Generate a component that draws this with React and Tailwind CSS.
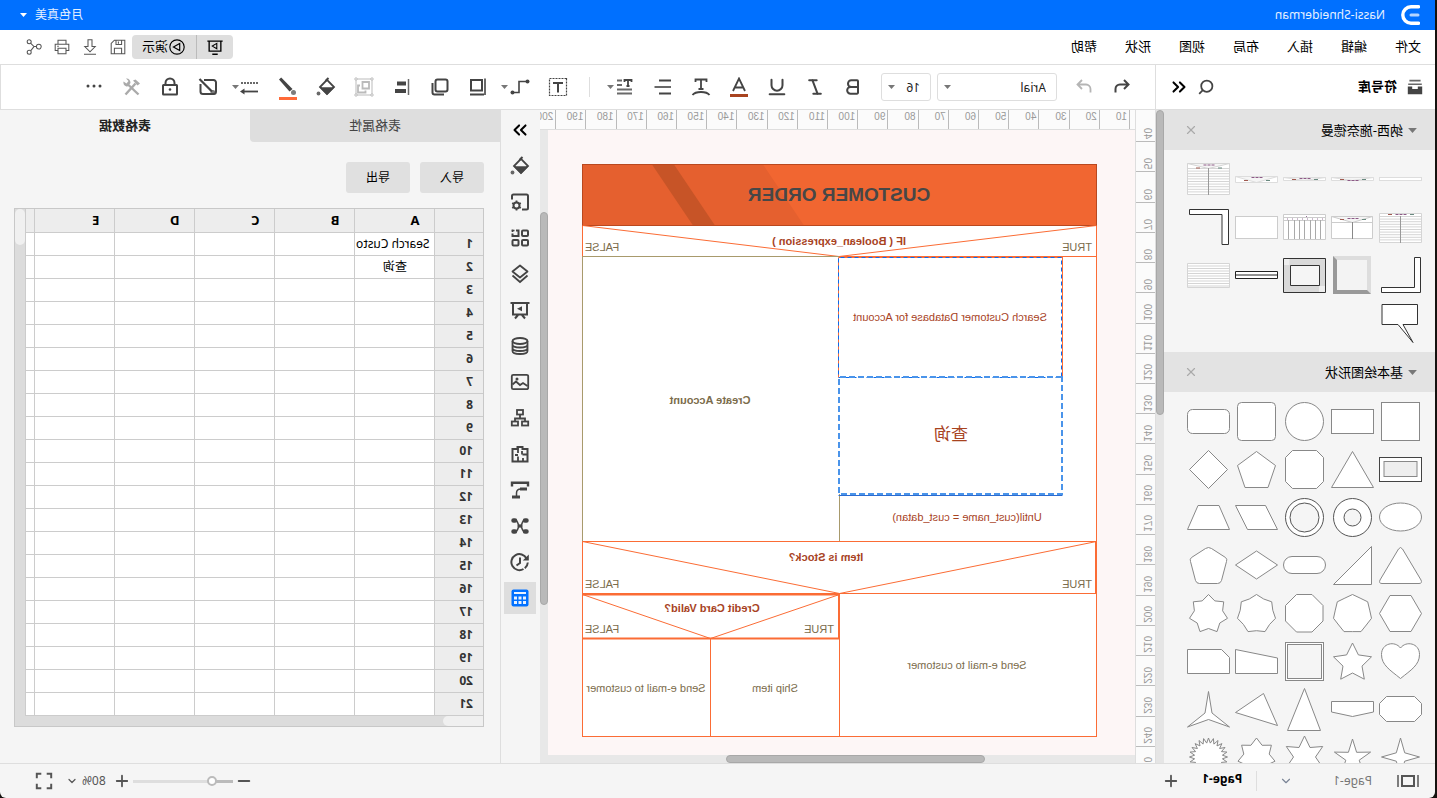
import clsx from 'clsx'
import { Bold, Italic, Underline, ChevronDown, ChevronsLeft, ChevronsRight, Minus, Plus, X } from 'lucide-react'

const menuItems = ['文件', '编辑', '插入', '布局', '视图', '形状', '帮助']

const Icon = ({ size = 20, width = 2, className, children }) => (
  <svg
    width={size}
    height={size}
    viewBox="0 0 20 20"
    fill="none"
    stroke="currentColor"
    strokeWidth={width}
    className={clsx('shrink-0', className)}
    aria-hidden="true"
  >
    {children}
  </svg>
)

const Caret = ({ className }) => (
  <svg width="7" height="4" viewBox="0 0 7 4" fill="currentColor" className={clsx('shrink-0', className)} aria-hidden="true">
    <path d="M0 0h7L3.500 4z" />
  </svg>
)

/* ---------- icons ---------- */

const BucketIcon = () => (
  <Icon>
    <path d="M7.500 1l3 3" strokeWidth="2" />
    <path d="M9 2.800L2 10l7 7 7-7-7-7.200z" strokeWidth="1.800" />
    <path d="M1.500 10.200h15L9 18z" fill="currentColor" stroke="none" />
    <circle cx="17.500" cy="16.500" r="1.900" fill="currentColor" stroke="none" opacity="0.8" />
  </Icon>
)

const PageGearIcon = () => (
  <Icon>
    <path d="M8 17.500H3.500a1.500 1.500 0 01-1.500-1.500V4a1.500 1.500 0 011.500-1.500h13A1.500 1.500 0 0118 4v3.500" />
    <circle cx="13.500" cy="13.500" r="3" />
    <path d="M13.500 8.500v2M13.500 16.500v2M9.200 11l1.700 1M16.100 15l1.700 1M9.200 16l1.700-1M16.100 12l1.700-1" strokeWidth="1.800" />
  </Icon>
)

const GridIcon = () => (
  <Icon>
    <rect x="2" y="2.500" width="6" height="5.500" rx="1" />
    <rect x="2" y="12" width="6" height="5.500" rx="1" />
    <rect x="11.500" y="12" width="6" height="5.500" rx="1" />
    <path d="M14 2.500h-2.500V8h6V5.500" />
    <path d="M15.500 2.500h3M17.500 1.500v2.500" strokeWidth="1.600" />
  </Icon>
)

const LayersIcon = () => (
  <Icon width={1.8}>
    <path d="M10 1.500l7.500 6-7.500 6-7.500-6z" strokeLinejoin="round" />
    <path d="M2.500 11.500l7.500 6.500 7.500-6.500" />
  </Icon>
)

const PresentIcon = () => (
  <Icon>
    <path d="M0.500 3h19" />
    <path d="M3 3v11.500h14V3M8 15l-3 3.500M12 15l3 3.500" />
    <path d="M8 6.200v5l5-2.500z" fill="currentColor" stroke="none" />
  </Icon>
)

const DatabaseIcon = () => (
  <Icon width={1.8}>
    <ellipse cx="10" cy="5" rx="7.500" ry="3" />
    <path d="M2.500 5v10c0 4 15 4 15 0V5M2.500 8.500c0 4 15 4 15 0M2.500 12c0 4 15 4 15 0" />
  </Icon>
)

const ImageIcon = () => (
  <Icon width={1.8}>
    <rect x="1.800" y="2.800" width="16.400" height="14.400" rx="1.500" />
    <path d="M2.500 14l4.500-3 3 2 4-3.500 3.500 3" />
    <circle cx="13" cy="7" r="1.500" fill="currentColor" stroke="none" />
  </Icon>
)

const OrgIcon = () => (
  <Icon width={1.8}>
    <rect x="7" y="2" width="6" height="4.500" />
    <rect x="1.800" y="13.500" width="6.200" height="4" />
    <rect x="12" y="13.500" width="6.200" height="4" />
    <path d="M10 6.500v4M5 13.500v-3h10v3" />
  </Icon>
)

const PlanIcon = () => (
  <Icon>
    <path d="M2.500 5h5V3h5v2h5v12.500h-15z" transform="translate(20 0) scale(-1 1)" />
    <path d="M3 10.500h4.500M8 7v3.500M12 3.500V9M12 12.500v5M12 11h3M7 14v3" strokeWidth="1.800" />
  </Icon>
)

const TimelineIcon = () => (
  <Icon>
    <path d="M2 6.500V2.800h16v3.700" strokeWidth="2.400" />
    <path d="M3 9h7" strokeWidth="3" />
    <path d="M9 9c3.500 0 4.500 1.500 4.500 4v3" strokeWidth="1.500" />
    <path d="M10 17h8" strokeWidth="3" />
  </Icon>
)

const MindMapIcon = () => (
  <Icon>
    <path d="M3.500 4.500h1.500M3.500 15.500h1.500M15 4.500h1.500M15 15.500h1.500" strokeWidth="4.500" strokeLinecap="round" />
    <path d="M5.500 4.500c3 0 2 5.500 4.500 5.500s1.500 5.500 4.500 5.500M14.500 4.500c-3 0-2 5.500-4.500 5.500s-1.500 5.500-4.500 5.500" strokeWidth="1.500" />
    <path d="M7.500 10h5" strokeWidth="3" />
  </Icon>
)

const HistoryIcon = () => (
  <Icon>
    <path d="M3.500 6.500a8 8 0 113 10.500M2.200 10.500a8 8 0 003 5.800" />
    <path d="M1.200 2.500v6h6z" fill="currentColor" stroke="none" />
    <path d="M10 5.500V11l3.500 2.500" />
  </Icon>
)

const TableIcon = () => (
  <Icon>
    <rect x="1.500" y="1.500" width="17" height="17" rx="2" fill="currentColor" stroke="none" />
    <path d="M4 5h12" stroke="#e8f1ff" />
    <path d="M4 10h3M8.500 10h3M13 10h3M4 14.500h3M8.500 14.500h3M13 14.500h3" stroke="#e8f1ff" strokeWidth="3" />
  </Icon>
)

const dockIcons = [
  ['填充', BucketIcon],
  ['页面设置', PageGearIcon],
  ['组件', GridIcon],
  ['图层', LayersIcon],
  ['演示', PresentIcon],
  ['数据', DatabaseIcon],
  ['图片', ImageIcon],
  ['组织结构', OrgIcon],
  ['平面图', PlanIcon],
  ['时间线', TimelineIcon],
  ['思维导图', MindMapIcon],
  ['历史', HistoryIcon],
  ['表格', TableIcon],
]

/* ---------- top ---------- */

const TitleBar = () => (
  <header className="flex h-[30px] shrink-0 items-center bg-[#0070ff] pl-[15px] pr-5 text-xs text-white">
    <svg width="19" height="20" viewBox="0 0 19 20" fill="none" stroke="currentColor" aria-hidden="true">
      <path d="M1.500 1.800H9a8.200 8.200 0 010 16.400H1.500" strokeWidth="3.400" strokeLinecap="round" />
      <path d="M2 10h7" strokeWidth="3" strokeLinecap="round" opacity="0.7" />
    </svg>
    <span className="ml-4 opacity-90">Nassi-Shneiderman</span>
    <button type="button" className="ml-auto flex items-center gap-2">
      <span className="opacity-90">月色真美</span>
      <Caret />
    </button>
  </header>
)

const MenuBar = () => (
  <div className="flex h-[35px] shrink-0 items-center border-b border-[#dedede] bg-white pl-3.5 pr-[26px] text-[13px] text-black">
    <nav className="flex gap-7">
      {menuItems.map((item) => (
        <button key={item} type="button">{item}</button>
      ))}
    </nav>
    <div className="ml-auto flex items-center gap-3 text-[#555]">
      <div className="-mr-1.5 flex h-6 overflow-hidden rounded bg-[#dedede] text-black">
        <button type="button" aria-label="放映" className="flex w-9 items-center justify-center">
          <Icon size={18} width={1.5}>
            <path d="M1.500 3.500h17M3.500 3.500v11h13v-11M7 18h6" />
            <path d="M8 6v6l5-3z" strokeWidth="1.200" />
          </Icon>
        </button>
        <button type="button" className="flex w-[65px] items-center justify-center border-l border-[#bbb]">
          <Icon size={18} width={1.3}>
            <circle cx="10" cy="10" r="8" />
            <path d="M7 6v8l7-4z" />
          </Icon>
          演示
        </button>
      </div>
      <button type="button" aria-label="保存">
        <Icon size={16} width={1.3}>
          <path d="M1.500 1.500h13l4 4v13h-17zM5.500 18.500v-7h9v7M5.500 1.500v5.500h7V1.500M9.500 3v3" />
        </Icon>
      </button>
      <button type="button" aria-label="下载">
        <Icon size={16} width={1.3}>
          <path d="M7.500 1h5v8.500h4L10 16 3.500 9.500h4zM2.500 19h15" />
        </Icon>
      </button>
      <button type="button" aria-label="打印">
        <Icon size={16} width={1.3}>
          <path d="M5 6V1.500h10V6M5 14.500H1.500V6.500h17v8H15M5 11.500h10v7H5zM14 9h2" />
        </Icon>
      </button>
      <button type="button" aria-label="分享">
        <Icon size={16} width={1.3}>
          <circle cx="4" cy="9.500" r="3" />
          <circle cx="16" cy="3.500" r="2.500" />
          <circle cx="16" cy="16.500" r="2.500" />
          <path d="M7 9.500h3l4-4M10 9.500l4 5" />
        </Icon>
      </button>
    </div>
  </div>
)

const Tool = ({ label, children, className }) => (
  <button type="button" aria-label={label} className={clsx('flex h-8 w-[38px] shrink-0 items-center justify-center text-[#444]', className)}>
    {children}
  </button>
)

const Picker = ({ label, value, className }) => (
  <label className={clsx('relative block h-7 rounded-[3px] border border-[#dedede] bg-white', className)}>
    <span className="sr-only">{label}</span>
    <select className="h-full w-full appearance-none bg-transparent pl-2.5 text-xs text-[#222]" defaultValue={value}>
      <option>{value}</option>
    </select>
    <Caret className="pointer-events-none absolute right-1.5 top-[11px] text-[#777]" />
  </label>
)

const Toolbar = () => (
  <div className="flex min-w-0 grow items-center border-r border-[#dedede] pl-3.5">
    <Tool label="撤销">
      <Icon>
        <path d="M8 3L3.500 7.500 8 12M3.500 7.500h8.500a4.500 4.500 0 014.500 4.500v3.500" />
      </Icon>
    </Tool>
    <Tool label="重做" className="text-[#b5b5b5]!">
      <Icon width={1.8}>
        <path d="M12 3l4.500 4.500L12 12M16.500 7.500H8A4.500 4.500 0 003.500 12v3.500" />
      </Icon>
    </Tool>
    <Picker label="字体" value="Arial" className="ml-2 w-[120px]" />
    <Picker label="字号" value="16" className="ml-1.5 w-[50px]" />
    <Tool label="加粗" className="ml-[9px]"><Bold size={20} strokeWidth={2.4} /></Tool>
    <Tool label="斜体"><Italic size={20} strokeWidth={2.4} /></Tool>
    <Tool label="下划线"><Underline size={22} strokeWidth={2.2} /></Tool>
    <Tool label="文字颜色">
      <Icon>
        <path d="M4 14l6-12.500L16 14M6 10.500h8" strokeWidth="1.800" />
        <path d="M1 18.500h18" stroke="#a8431f" strokeWidth="3" />
      </Icon>
    </Tool>
    <Tool label="文字弧形">
      <Icon>
        <path d="M4.500 5V2.500h11V5M10 2.500V12M7.500 12h5" strokeWidth="1.800" />
        <path d="M1.500 18c3-4 14-4 17 0" strokeWidth="1.800" />
      </Icon>
    </Tool>
    <Tool label="对齐">
      <Icon>
        <path d="M2 3.500h12M2 16.500h12" />
        <path d="M2 10h16.500" opacity="0.8" />
      </Icon>
    </Tool>
    <Tool label="行距">
      <Icon className="ml-2">
        <path d="M2.500 5V3h7v2M6 3v6M4.500 9h3" strokeWidth="1.800" />
        <path d="M12 3.500h5M12 8h5M2 12.500h15M2 16.500h15" strokeWidth="1.800" opacity="0.8" />
      </Icon>
      <Caret className="text-[#777]" />
    </Tool>
    <div className="mx-4 h-5 w-px shrink-0 bg-[#dedede]" />
    <Tool label="文本框" className="-ml-1">
      <Icon>
        <rect x="1.500" y="1.500" width="17" height="17" strokeWidth="1.200" strokeDasharray="2 1" />
        <path d="M5 6h10M10 6v9.500" strokeWidth="2" />
      </Icon>
    </Tool>
    <Tool label="连接线">
      <Icon className="ml-2" width={1.6}>
        <path d="M3 4.500h4.500l3.500 0v11h6" />
        <circle cx="2.500" cy="4.500" r="2" fill="currentColor" stroke="none" />
        <circle cx="17.500" cy="15.500" r="2" fill="currentColor" stroke="none" />
      </Icon>
      <Caret className="ml-0.5 text-[#777]" />
    </Tool>
    <Tool label="置底" className="ml-1">
      <Icon>
        <path d="M3 1.500v16.500" opacity="0.800" />
        <path d="M6 3h11v10.500H6zM4 17.500h14" strokeWidth="2" />
      </Icon>
    </Tool>
    <Tool label="层次">
      <Icon>
        <rect x="2.500" y="2.500" width="12" height="12" rx="2" />
        <path d="M17.500 6v9.500a2 2 0 01-2 2H6" />
      </Icon>
    </Tool>
    <Tool label="左对齐">
      <Icon>
        <path d="M3.500 2v16" strokeWidth="1.500" opacity="0.800" />
        <path d="M6 6.500h9M6 14h11" strokeWidth="4" />
      </Icon>
    </Tool>
    <Tool label="组合" className="text-[#bbb]!">
      <Icon width={1}>
        <rect x="2" y="2" width="16" height="16" />
        <g fill="#fff">
          <circle cx="2" cy="2" r="1.200" />
          <circle cx="18" cy="2" r="1.200" />
          <circle cx="2" cy="18" r="1.200" />
          <circle cx="18" cy="18" r="1.200" />
        </g>
        <path d="M5 5h6.500v6.500H5zM14 8.500h2v7H8.500v-2" strokeWidth="1.800" />
      </Icon>
    </Tool>
    <Tool label="填充"><BucketIcon /></Tool>
    <Tool label="线条颜色">
      <svg width="20" height="26" viewBox="0 0 20 26" fill="none" aria-hidden="true">
        <path d="M16.800 3.500L19 5.500 8.500 17.500 5.500 15z" fill="currentColor" />
        <circle cx="4.500" cy="18.500" r="2.500" fill="currentColor" opacity="0.700" />
        <path d="M1 24.500h18" stroke="#ff6a38" strokeWidth="3" />
      </svg>
    </Tool>
    <Tool label="线型">
      <Icon className="ml-2">
        <path d="M1 6h18" strokeWidth="1.800" strokeDasharray="2 1" opacity="0.800" />
        <path d="M1 14.500h15" strokeWidth="1.800" />
        <path d="M14.500 11.500l4.500 3-4.500 3z" fill="currentColor" stroke="none" />
      </Icon>
      <Caret className="text-[#777]" />
    </Tool>
    <Tool label="无样式" className="ml-1">
      <Icon>
        <path d="M14 3H4.500A2.500 2.500 0 002 5.500v9A2.500 2.500 0 004.500 17H15a2.500 2.500 0 002.500-2.500V7" />
        <path d="M18.500 2L6 14.500" strokeWidth="2.200" />
        <circle cx="5" cy="15.500" r="2.500" fill="currentColor" stroke="none" opacity="0.700" />
      </Icon>
    </Tool>
    <Tool label="锁定">
      <Icon>
        <rect x="3" y="8" width="14" height="9.500" rx="0.500" />
        <path d="M5.500 8V6a4.500 4.500 0 019 0v2" />
        <circle cx="10" cy="12.500" r="1.300" fill="currentColor" stroke="none" />
      </Icon>
    </Tool>
    <Tool label="工具" className="text-[#aaa]!">
      <Icon>
        <path d="M6.500 6.500L16.500 17.500" strokeWidth="2.400" />
        <path d="M2 6.500L6.500 2.500l2.500 1-4.500 5z" fill="currentColor" stroke="none" />
        <path d="M3.500 17.500L14 7.500" strokeWidth="2.400" />
        <path d="M16 1.500l-2.500 2.500 2 2.500 3-2c.5 2.500-1 5-4 5l-3-3.500c0-3 2-5 4.500-4.500z" fill="currentColor" stroke="none" />
      </Icon>
    </Tool>
    <Tool label="更多">
      <Icon className="-mt-0.5">
        <g fill="currentColor" stroke="none">
          <circle cx="4" cy="10" r="1.500" />
          <circle cx="10" cy="10" r="1.500" />
          <circle cx="16" cy="10" r="1.500" />
        </g>
      </Icon>
    </Tool>
  </div>
)

const ToolRow = () => (
  <div className="flex h-[45px] shrink-0 border-b border-[#dedede] bg-white">
    <div className="flex w-[280px] shrink-0 items-center border-r border-[#dedede] pl-3 pr-3 text-[#444]">
      <Icon size={16} className="text-[#444]">
        <path d="M3 2h14M1.500 6.500h17" strokeWidth="2" opacity="0.800" />
        <path d="M1 9.500h5.500v3h7v-3H19V19H1z" fill="currentColor" stroke="none" />
      </Icon>
      <h2 className="ml-2.5 text-[13px] font-bold text-black">符号库</h2>
      <button type="button" aria-label="搜索" className="ml-auto">
        <Icon size={16}>
          <circle cx="9" cy="9" r="7" strokeWidth="2.200" />
          <path d="M14 14l4.500 4.500" strokeWidth="2.200" />
        </Icon>
      </button>
      <button type="button" aria-label="收起" className="ml-2 text-black"><ChevronsLeft size={22} strokeWidth={2.2} /></button>
    </div>
    <Toolbar />
  </div>
)

/* ---------- symbol library ---------- */

// points of a star with n tips; r === R * cos(pi / n) gives a plain polygon
const star = (n, R, r, cy = 24) => {
  const pts = []
  for (let i = 0; i < n * 2; i++) {
    const rad = i % 2 ? r : R
    const a = (Math.PI * i) / n - Math.PI / 2
    pts.push(`${(23.5 + rad * Math.cos(a)).toFixed(1)},${(cy + rad * Math.sin(a)).toFixed(1)}`)
  }
  return pts.join(' ')
}

const hLines = (from, to, step) => {
  let d = ''
  for (let y = from; y < to; y += step) d += `M2.5 ${y}h42`
  return d
}

const Marks = ({ y, y2 }) => (
  <g strokeWidth="1">
    <path d={`M17.5 ${y}h12`} stroke="#8d5a86" strokeDasharray="3 1" />
    <path d={`M10 ${y2}h4`} stroke="#6a8a80" />
    <path d={`M32 ${y2}h4`} stroke="#a05a50" />
  </g>
)

const nassiShapes = [
  <rect x="2.500" y="22.500" width="42" height="3" stroke="#ddd" />,
  <g stroke="#ddd">
    <path d="M2.500 22.500h42v3h-42zM2.500 22.500l21 3 21-3" />
    <Marks y={25.5} y2={24.5} />
  </g>,
  <g stroke="#ddd">
    <path d="M2.500 22.500h42v3h-42zM2.500 22.500l21 3 21-3" />
    <Marks y={23.5} y2={24.5} />
  </g>,
  <g stroke="#ddd">
    <path d="M2.500 21.500h42v6h-42zM2.500 21.500l21 6 21-6" />
    <Marks y={22.5} y2={25.5} />
  </g>,
  <g stroke="#d5d5d5">
    <path d="M2.500 8.500h42v31h-42zM2.500 8.500l21 5 21-5" />
    <path d={hLines(13.5, 39, 2.6)} />
    <path d="M23.500 13v27" stroke="#999" />
    <Marks y={10} y2={13} />
  </g>,
  <g stroke="#d5d5d5">
    <path d="M2.500 10.500h42v29h-42z" />
    <path d={hLines(13.5, 39, 2.6)} />
    <path d="M23.500 13v27" stroke="#999" />
    <Marks y={11.5} y2={11.5} />
  </g>,
  <g stroke="#ccc">
    <path d="M3.500 13.500h41v22h-41zM3.500 19.500h41M3.500 13.500l20 6 21-6" />
    <path d="M23.500 19v17" stroke="#888" />
    <Marks y={15.5} y2={16.5} />
  </g>,
  <g stroke="#ccc">
    <path d="M2.500 11.500h42v25h-42zM2.500 14.500h42M2.500 17.500h42" />
    <path d="M7.500 17v19M12.500 17v19M17.500 17v19M23.500 17v19M28.500 17v19M33.500 17v19M39.500 17v19" stroke="#aaa" />
    <path d="M21 13.500h5M5 16h40" stroke="#98709a" strokeDasharray="1 4" />
  </g>,
  <rect x="2.500" y="13.500" width="42" height="22" stroke="#ccc" />,
  <path d="M3.500 6.500h39v5h-32.500v30h-6.500z" stroke="#333" />,
  <path d="M3.500 6.500h6v30h33v5h-39z" stroke="#333" />,
  <g stroke="none">
    <path d="M5 5h38v38H5z" fill="#ddd" />
    <path d="M43 5v38H5l4-4h30V9z" fill="#999" />
    <path d="M9 9h30v30H9z" fill="#f3f3f3" />
  </g>,
  <g stroke="#333">
    <path d="M2.500 7.500h42v34h-42z" fill="#d9d9d9" />
    <path d="M38.500 8h5.500v6h-5.500zM3 35h6v6H3z" fill="#eee" stroke="none" />
    <path d="M8.500 14.500h29v20h-29z" fill="#f5f5f5" />
  </g>,
  <path d="M2.500 20.500h42v7h-42zM2.500 24h42" stroke="#222" />,
  <g stroke="#d5d5d5">
    <path d="M2.500 12.500h42v24h-42z" />
    <path d={hLines(15, 36, 2.5)} />
  </g>,
  <path d="M6.500 5.500h35.500v20H26L11 43.500 21 25.500H6.500z" stroke="#333" />,
]

const basicShapes = [
  <rect x="4.500" y="5.500" width="38" height="38" />,
  <rect x="2.500" y="12.500" width="42" height="24" />,
  <circle cx="23.500" cy="24.500" r="19" />,
  <rect x="4.500" y="5.500" width="38" height="38" rx="4" />,
  <rect x="2.500" y="12.500" width="42" height="24" rx="5" />,
  <g stroke="#444">
    <rect x="2.500" y="12.500" width="42" height="24" />
    <rect x="7" y="16.500" width="33" height="15" fill="#eee" stroke="#888" />
  </g>,
  <path d="M23.500 6.500l21 36h-42z" />,
  <path d="M11.500 5.500h24l7 7v24l-7 7h-24l-7-7v-24z" />,
  <path d="M23.500 6.500l19 14-7.500 22H12l-7.500-22z" />,
  <path d="M23.500 5.500l19 19-19 19-19-19z" />,
  <ellipse cx="23.500" cy="24" rx="21" ry="14" />,
  <g stroke="#555">
    <circle cx="23.500" cy="24.500" r="19" />
    <circle cx="23.500" cy="24.500" r="8.500" fill="#f5f5f5" />
  </g>,
  <g stroke="#555">
    <circle cx="23.500" cy="24.500" r="19" />
    <circle cx="23.500" cy="24.500" r="14.500" fill="#f5f5f5" />
  </g>,
  <path d="M14.500 12.500h30l-12 24h-30z" transform="translate(47 0) scale(-1 1) translate(47 0) scale(-1 1)" />,
  <path d="M13 12.500h21l10.500 24h-42z" />,
  <path d="M21.500 8q2-3 4 0L44 39q1.500 3.500-2 3.500H5q-3.500 0-2-3.500z" />,
  <path d="M4.500 5.500v38h38z" />,
  <rect x="2.500" y="15.500" width="42" height="17" rx="8.500" />,
  <path d="M23.500 10l21 14-21 14-21-14z" />,
  <path d="M20.500 7.500q3-2 6 0l14 9q2 1.500 1 4l-5 19q-1 3-4 3h-18q-3 0-4-3l-5-19q-1-2.500 1-4z" />,
  <path d="M2.500 24.500l10.500-18h21l10.500 18-10.500 18H13z" />,
  <polygon points={star(7, 19.5, 17.6, 25)} />,
  <path d="M16 5.500h15.500l11 11V32l-11 11H16L5 32V16.500z" />,
  <polygon points={star(7, 19.5, 16.7, 25)} />,
  <polygon points={star(7, 19.5, 14.5, 25)} />,
  <path d="M23.500 41.500C13 33 4.500 28 4.500 17.500 4.500 6 18 3.500 23.500 11 29 3.500 42.500 6 42.500 17.500 42.500 28 34 33 23.500 41.500z" />,
  <polygon points={star(5, 20, 10, 26)} />,
  <g>
    <rect x="4.500" y="5.500" width="38" height="38" />
    <rect x="6.500" y="7.500" width="34" height="34" fill="#f5f5f5" />
  </g>,
  <path d="M44.500 12.500l-42 8.500v15.500h42z" />,
  <path d="M2.500 20.500l8-8h34v24h-42z" />,
  <path d="M9.500 11.500h28l7 7v11l-7 7h-28l-7-7v-11z" />,
  <path d="M2.500 16.500h42V27l-21 4.500L2.500 27z" />,
  <path d="M23.500 3.500l17 42h-33z" />,
  <path d="M16.500 8.500l28 19-42 13z" />,
  <path d="M23.500 6.500l3.500 21.500 17.500 14-21-7.500-21 7.500L20 28z" />,
  <polygon points={star(4, 19, 6)} />,
  <polygon points={star(5, 19, 7, 25)} />,
  <polygon points={star(6, 21, 11)} />,
  <polygon points={star(7, 19, 13)} />,
  <polygon points={star(24, 19, 14)} />,
]

const ShapeSection = ({ title, shapes }) => (
  <section>
    <div className="flex h-10 items-center bg-[#e3e3e3] pl-[18px] pr-5">
      <Caret className="h-[5px] w-[9px] text-[#777]" />
      <h3 className="ml-[5px] pt-0.5 text-[13px] text-black">{title}</h3>
      <button type="button" aria-label="关闭" className="ml-auto text-[#aaa]"><X size={14} strokeWidth={2} /></button>
    </div>
    <ul className="flex flex-wrap py-[5px] pl-[11px]">
      {shapes.map((shape, i) => (
        <li key={i} className="size-12">
          <svg width="48" height="48" viewBox="0 0 48 48" fill="#fff" stroke="#888" strokeWidth="1" aria-hidden="true">{shape}</svg>
        </li>
      ))}
    </ul>
  </section>
)

const Library = () => (
  <aside className="flex w-[280px] shrink-0 overflow-hidden border-r border-[#dedede]">
    <div className="grow">
      <ShapeSection title="纳西-施奈德曼" shapes={nassiShapes} />
      <ShapeSection title="基本绘图形状" shapes={basicShapes} />
    </div>
    <div className="w-2 shrink-0 bg-[#e5e5e5]">
      <div className="h-[305px] rounded border border-[#a8a8a8] bg-[#b9b9b9]" />
    </div>
  </aside>
)

/* ---------- canvas ---------- */

const Diagram = () => (
  <svg width="516" height="574" viewBox="0 0 516 574" fill="none" stroke="#fb6c35" strokeWidth="1" className="shrink-0">
    <rect x="0.500" y="61.500" width="514" height="511" fill="#fff" />
    <rect x="0.500" y="0.500" width="514" height="61" fill="#f16631" stroke="none" />
    <path d="M334 0.500h180.500v61H293z" fill="#e5602f" stroke="none" />
    <path d="M423 0.500h22l-41 61h-22z" fill="#c75427" stroke="none" />
    <rect x="0.500" y="0.500" width="514" height="61" stroke="#b9481f" />

    <path d="M0.500 61.500l257.500 31 256.500-31M0.500 92.500h258" />
    <path d="M258 92.500h256.500v285M257.500 330v47" stroke="#a89a6c" />

    {/* loop body */}
    <path d="M34.500 93v120M34.500 93.500h224v120" />
    <rect x="35.500" y="93.500" width="223" height="120" stroke="#0a6cf0" strokeDasharray="4 3" />
    <rect x="35" y="213" width="223" height="117" stroke="#4a94ea" strokeWidth="2" strokeDasharray="6 3" />
    <path d="M34.500 331.500h224" stroke="#2c6cd0" />

    <path d="M0.500 377.500h514M0.500 429.500h514M1.500 377.500v52" />
    <path d="M0.500 377.500l257 52 257-52" />

    {/* credit card check */}
    <path d="M257.500 430.500h257M257.500 474.500h257M258 430v45" strokeWidth="2" />
    <path d="M257.500 430.500l129 44 128-44M257.500 474v98.500M386.500 474v98.500" />

    <g stroke="none" textAnchor="middle" fontFamily="'Liberation Sans', 'Noto Sans CJK SC', sans-serif" fontSize="11">
      <text x="258" y="37" fontSize="19" fontWeight="bold" fill="#474747">CUSTOMER ORDER</text>
      <g fontWeight="bold" fill="#a8431f">
        <text x="258" y="81">IF ( Boolean_expression )</text>
        <text x="271" y="397">Item is Stock?</text>
        <text x="385" y="448">Credit Card Valid?</text>
      </g>
      <g fill="#a8431f">
        <text x="147" y="157">Search Customer Database for Account</text>
        <text x="146" y="276" fontSize="17">查询</text>
        <text x="130" y="357">Until(cust_name = cust_datan)</text>
      </g>
      <g fill="#7b6c4c">
        <text x="387" y="240" fontWeight="bold">Create Account</text>
        <text x="20" y="87">TRUE</text>
        <text x="495" y="87">FALSE</text>
        <text x="20" y="424">TRUE</text>
        <text x="495" y="424">FALSE</text>
        <text x="278" y="469">TRUE</text>
        <text x="495" y="469">FALSE</text>
        <text x="130" y="505">Send e-mail to customer</text>
        <text x="322" y="528">Ship item</text>
        <text x="451" y="528">Send e-mail to customer</text>
      </g>
    </g>
  </svg>
)

const hTicks = Array.from({ length: 20 }, (_, i) => (i + 1) * 10)
const vTicks = Array.from({ length: 22 }, (_, i) => (i + 4) * 10)

const Canvas = () => (
  <main className="flex min-w-0 grow overflow-hidden">
    <div className="w-[20px] shrink-0 overflow-hidden border-r border-[#dedede] bg-[#fbfbfb] pt-0.5 font-['Liberation_Sans',sans-serif] text-[10px] leading-3 text-[#999]">
      <div className="grid h-[665px] grid-rows-[repeat(22,minmax(0,1fr))]">
        {vTicks.map((n) => (
          <div key={n} className="flex items-end border-b border-[#bbb] pb-0.5 pl-0.5">
            <span className="rotate-180 [writing-mode:vertical-rl]">{n}</span>
          </div>
        ))}
      </div>
    </div>
    <div className="flex min-w-0 grow flex-col">
      <div className="h-5 shrink-0 overflow-hidden border-b border-[#dedede] bg-[#fbfbfb] pl-[5px] font-['Liberation_Sans',sans-serif] text-[10px] leading-3 text-[#999]">
        <div className="grid h-full w-[604px] grid-cols-20">
          {hTicks.map((n) => (
            <span key={n} className="border-l border-[#bbb] pl-0.5 pt-px">{n}</span>
          ))}
        </div>
      </div>
      <div className="flex min-h-0 grow">
        <div className="flex min-w-0 grow flex-col">
          <div className="flex min-h-0 grow justify-center overflow-hidden bg-[#fdf6f6] pl-1 pt-[34px]">
            <Diagram />
          </div>
          <div className="flex h-2 shrink-0 justify-center bg-[#e8e8e8] pr-7">
            <div className="w-[259px] rounded border border-[#a8a8a8] bg-[#b9b9b9]" />
          </div>
        </div>
        <div className="w-2 shrink-0 bg-[#e8e8e8] pt-[82px]">
          <div className="h-[393px] rounded border border-[#a8a8a8] bg-[#b9b9b9]" />
        </div>
      </div>
    </div>
  </main>
)

/* ---------- right side ---------- */

const Dock = () => (
  <nav className="flex w-10 shrink-0 flex-col items-center border-r border-[#dedede] pt-0.5 text-[#444]">
    <button type="button" aria-label="展开" className="flex h-9 items-center text-black"><ChevronsRight size={22} strokeWidth={2.2} /></button>
    {dockIcons.map(([label, Glyph], i) => (
      <button
        key={label}
        type="button"
        aria-label={label}
        className={clsx('my-0.5 flex size-8 items-center justify-center', i === dockIcons.length - 1 && 'bg-[#dedede] text-[#0070ff]')}
      >
        <Glyph />
      </button>
    ))}
  </nav>
)

const columns = ['A', 'B', 'C', 'D', 'E']
const rows = Array.from({ length: 21 }, (_, i) => i + 1)

const Sheet = () => (
  <div className="mt-[15px] border border-[#c8c8c8]">
    <div className="flex">
      <table className="min-w-0 grow table-fixed border-collapse text-xs text-black">
        <thead>
          <tr className="h-[23px] bg-[#ededed]">
            <th className="w-12 border-b border-r border-[#ccc]" />
            {columns.map((c) => (
              <th key={c} scope="col" className="w-20 border-b border-r border-[#ccc] pl-[15px] text-left text-[13px] leading-4">{c}</th>
            ))}
            <th className="border-b border-[#ccc]" />
          </tr>
        </thead>
        <tbody className="bg-white">
          {rows.map((r) => (
            <tr key={r} className="h-[23px]">
              <th scope="row" className="border-b border-r border-[#ccc] bg-[#ededed] pl-2.5 text-left leading-4 text-[#333]">{r}</th>
              {columns.map((c) => (
                <td
                  key={c}
                  className={clsx('overflow-hidden whitespace-nowrap border-b border-r border-[#ccc] leading-4', r === 2 ? 'text-center' : 'pl-[5px]')}
                >
                  {c === 'A' && r === 1 && 'Search Custo'}
                  {c === 'A' && r === 2 && '查询'}
                </td>
              ))}
              <td className="border-b border-[#ccc]" />
            </tr>
          ))}
        </tbody>
      </table>
      <div className="w-[11px] shrink-0 border-l border-[#ccc] bg-[#dcdcdc]">
        <div className="h-9 rounded-md bg-[#f0f0f0]" />
      </div>
    </div>
    <div className="h-2.5 bg-[#dcdcdc]">
      <div className="h-full w-10 rounded-r-md bg-[#f0f0f0]" />
    </div>
  </div>
)

const DataPanel = () => (
  <aside className="w-[500px] shrink-0">
    <div role="tablist" className="flex h-8 text-[13px]">
      <button type="button" role="tab" aria-selected="false" className="w-1/2 rounded-br bg-[#dedede] text-[#444]">表格属性</button>
      <button type="button" role="tab" aria-selected="true" className="w-1/2 font-bold text-[#222]">表格数据</button>
    </div>
    <div className="pl-4 pr-3.5 pt-5">
      <div className="flex gap-2.5 text-xs text-black">
        <button type="button" className="h-[31px] w-16 rounded-[3px] bg-[#e0e0e0]">导入</button>
        <button type="button" className="h-[31px] w-16 rounded-[3px] bg-[#e0e0e0]">导出</button>
      </div>
      <Sheet />
    </div>
  </aside>
)

const StatusBar = () => (
  <footer className="flex h-[35px] shrink-0 items-center border-t border-[#dedede] pl-4 pr-[35px] text-xs text-[#555]">
    <svg width="22" height="12" viewBox="0 0 22 12" fill="none" stroke="currentColor" aria-hidden="true">
      <path d="M1 0v12M21 0v12" strokeWidth="1.500" />
      <rect x="5" y="1" width="12" height="10" strokeWidth="2" />
    </svg>
    <button type="button" className="ml-[25px] flex items-center text-[#777]">
      Page-1
      <ChevronDown size={14} className="ml-10 text-[#7a8496]" />
    </button>
    <div className="ml-[22px] h-5 w-px bg-[#dedede]" />
    <button type="button" className="ml-3.5 pb-1 font-bold text-black">Page-1</button>
    <button type="button" aria-label="新建页面" className="ml-[22px]"><Plus size={18} strokeWidth={2.4} /></button>

    <button type="button" aria-label="缩小" className="ml-auto"><Minus size={18} strokeWidth={2.6} /></button>
    <input
      type="range"
      aria-label="缩放"
      defaultValue="18"
      className="mx-0.5 h-3 w-[100px] appearance-none bg-[linear-gradient(to_right,#bbb_20%,#dedede_20%)] bg-[length:100%_3px] bg-center bg-no-repeat [&::-webkit-slider-thumb]:size-[10px] [&::-webkit-slider-thumb]:appearance-none [&::-webkit-slider-thumb]:rounded-full [&::-webkit-slider-thumb]:border-2 [&::-webkit-slider-thumb]:border-[#bbb] [&::-webkit-slider-thumb]:bg-white"
    />
    <button type="button" aria-label="放大"><Plus size={18} strokeWidth={2.4} /></button>
    <button type="button" className="ml-[7px] flex items-center gap-1">
      80%
      <ChevronDown size={12} strokeWidth={2.4} />
    </button>
    <button type="button" aria-label="全屏" className="ml-[13px]">
      <Icon size={18} width={2.2}>
        <path d="M2 7V2h5M13 2h5v5M18 13v5h-5M7 18H2v-5" />
      </Icon>
    </button>
  </footer>
)

const App = () => (
  <div className="h-screen -scale-x-100 overflow-hidden bg-[#15120f] pl-0.5 font-['Noto_Sans','Noto_Sans_CJK_SC',sans-serif]">
    <div className="flex h-full flex-col overflow-hidden rounded-b-md bg-[#f5f5f5]">
      <TitleBar />
      <MenuBar />
      <ToolRow />
      <div className="flex min-h-0 grow">
        <Library />
        <Canvas />
        <Dock />
        <DataPanel />
      </div>
      <StatusBar />
    </div>
  </div>
)

export default App
